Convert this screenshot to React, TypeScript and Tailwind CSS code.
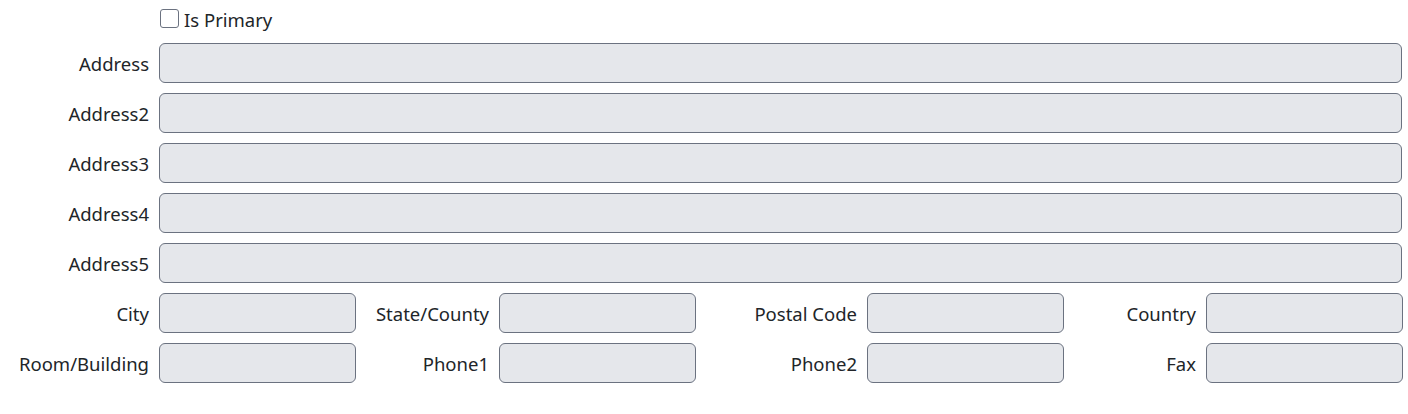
import React from 'react'

const font = { fontFamily: '"Noto Sans", "Open Sans", sans-serif' }

function Input({ className = '' }: { className?: string }) {
  return (
    <input
      type="text"
      className={`h-10 min-w-0 rounded-md border border-[#6b7280] bg-[#e5e7eb] px-3 text-[18px] text-[#212529] outline-none ${className}`}
    />
  )
}

function Label({ children }: { children: React.ReactNode }) {
  return <label className="pt-[3px] text-right text-[18.5px] leading-none text-[#212529] whitespace-nowrap">{children}</label>
}

export default function App() {
  const lines = ['Address', 'Address2', 'Address3', 'Address4', 'Address5']
  const grid = [
    ['City', 'State/County', 'Postal Code', 'Country'],
    ['Room/Building', 'Phone1', 'Phone2', 'Fax'],
  ]

  return (
    <div className="w-[1402px] bg-white pt-[9px]" style={font}>
      {/* флажок */}
      <div className="ml-[160px] flex h-[19px] items-center gap-[5px]">
        <input type="checkbox" className="h-[19px] w-[19px] appearance-none rounded-[3px] border border-[#6b7280] bg-white" />
        <span className="pt-[2px] text-[18.5px] text-[#212529]">Is Primary</span>
      </div>

      <div className="mt-[15px] grid grid-cols-[149px_1fr] items-center gap-x-[10px] gap-y-[10px]">
        {lines.map((l) => (
          <React.Fragment key={l}>
            <Label>{l}</Label>
            <Input className="w-full" />
          </React.Fragment>
        ))}
      </div>

      <div className="mt-[10px] grid grid-cols-[149px_197px_123px_197px_151px_197px_122px_197px] items-center gap-x-[10px] gap-y-[10px]">
        {grid.map((row) =>
          row.map((l) => (
            <React.Fragment key={l}>
              <Label>{l}</Label>
              <Input className="w-full" />
            </React.Fragment>
          )),
        )}
      </div>
    </div>
  )
}
